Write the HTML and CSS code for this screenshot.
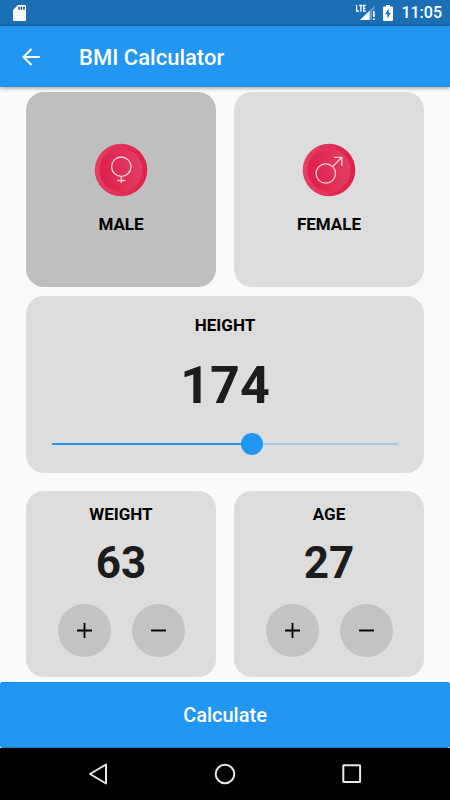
FILE: index.html
```html
<!DOCTYPE html>
<html lang="en">
<head>
<meta charset="utf-8">
<meta name="viewport" content="width=device-width, initial-scale=1">
<title>BMI Calculator</title>
<link rel="stylesheet" href="styles.css">
</head>
<body>
<div class="status">
  <svg class="sd" width="14" height="18" viewBox="0 0 14 18" aria-hidden="true"><path fill="#fff" d="M5 1h7Q13 1 13 2V16Q13 17 12 17H1Q0 17 0 16V6z"/><path stroke="#1b3f86" stroke-width="1.500" d="M6 2.800v3M8.500 2.800v3M11 2.800v3"/></svg>
  <svg class="signal" width="20" height="18" viewBox="0 0 20 18" aria-hidden="true"><path fill="#659fce" d="M19.500 1.500V6H17V16H5z"/><path fill="#fff" d="M14.500 7V16H5z"/><path fill="none" stroke="#fff" stroke-width="1.300" d="M1.600 .900V7.200H4M4.200 1.500H7.600M5.900 1.500V7.800M10.800 1.500H8.700V7.200H10.800M8.700 4.300H10.500"/><path fill="#fff" d="M18 7h1.700v6H18zM18 14.300h1.700V16H18z"/></svg>
  <svg width="10" height="18" viewBox="0 0 10 18" aria-hidden="true"><path fill="#fff" d="M3 1h4v1.500h2Q10 2.500 10 3.500V16Q10 17 9 17H1Q0 17 0 16V3.500Q0 2.500 1 2.500H3z"/><path fill="#1a6fb5" d="M5.700 4.500L2 10.200h2.400V14.500L8 8.700H5.700z"/></svg>
  <time class="clock">11:05</time>
</div>
<header class="appbar">
  <button class="back" type="button" aria-label="Back"><svg width="20" height="20" viewBox="0 0 20 20"><path fill="none" stroke="#fff" stroke-width="2" d="M18.800 9H2.500M10.500 1L2.500 9l8 8"/></svg></button>
  <h1 class="title">BMI Calculator</h1>
</header>
<main class="content">
  <div class="row genders">
    <button class="card gender selected" type="button" aria-pressed="true">
      <svg width="54" height="54" viewBox="0 0 54 54" aria-hidden="true"><defs><linearGradient id="rim" x1="0" x2="1" y1="0" y2="0"><stop offset="0" stop-color="#e63f63"/><stop offset="1" stop-color="#de1f4a"/></linearGradient><linearGradient id="face" x1="0" x2="1" y1="0.600" y2="0.400"><stop offset="0" stop-color="#de1f4a"/><stop offset="1" stop-color="#e23f62"/></linearGradient></defs><circle cx="27" cy="27" r="26.300" fill="url(#rim)"/><circle cx="27" cy="27" r="21.500" fill="url(#face)"/><g fill="none" stroke="#fbd3dc" stroke-width="1.300"><circle cx="27.300" cy="23.700" r="9.700"/><path d="M27.300 33.400V40M23.300 37.500h8"/></g></svg>
      <span class="label">MALE</span>
    </button>
    <button class="card gender" type="button" aria-pressed="false">
      <svg width="54" height="54" viewBox="0 0 54 54" aria-hidden="true"><circle cx="27" cy="27" r="26.300" fill="url(#rim)"/><circle cx="27" cy="27" r="21.500" fill="url(#face)"/><g fill="none" stroke="#fbd3dc" stroke-width="1.300"><circle cx="23.800" cy="30.500" r="9.700"/><path d="M30.700 23.600L39.500 14.500M32 14.300h7.800v8.500"/></g></svg>
      <span class="label">FEMALE</span>
    </button>
  </div>
  <section class="card height">
    <label class="label" for="height">HEIGHT</label>
    <output class="value large" for="height">174</output>
    <input class="slider" id="height" type="range" min="0" max="299" value="174">
  </section>
  <div class="row">
    <section class="card counter">
      <h2 class="label">WEIGHT</h2>
      <output class="value">63</output>
      <div class="steps">
        <button class="step" type="button" aria-label="Increase weight"><svg width="15" height="15" viewBox="0 0 16 16"><path stroke="#000" stroke-width="2" d="M0 8h16M8 0v16"/></svg></button>
        <button class="step" type="button" aria-label="Decrease weight"><svg width="15" height="15" viewBox="0 0 16 16"><path stroke="#000" stroke-width="2" d="M0 8h16"/></svg></button>
      </div>
    </section>
    <section class="card counter">
      <h2 class="label">AGE</h2>
      <output class="value">27</output>
      <div class="steps">
        <button class="step" type="button" aria-label="Increase age"><svg width="15" height="15" viewBox="0 0 16 16"><path stroke="#000" stroke-width="2" d="M0 8h16M8 0v16"/></svg></button>
        <button class="step" type="button" aria-label="Decrease age"><svg width="15" height="15" viewBox="0 0 16 16"><path stroke="#000" stroke-width="2" d="M0 8h16"/></svg></button>
      </div>
    </section>
  </div>
</main>
<button class="calculate" type="button">Calculate</button>
<nav class="sysnav" aria-label="System">
  <button type="button" aria-label="Back"><svg width="22" height="22" viewBox="0 0 22 22"><path fill="none" stroke="#e8e8e8" stroke-width="2" stroke-linejoin="round" d="M19 1.500v19L3 11z"/></svg></button>
  <button type="button" aria-label="Home"><svg width="22" height="22" viewBox="0 0 22 22"><circle cx="11" cy="11" r="9.300" fill="none" stroke="#e8e8e8" stroke-width="2"/></svg></button>
  <button type="button" aria-label="Recent apps"><svg width="22" height="22" viewBox="0 0 22 22"><rect x="2.300" y="2.300" width="16.800" height="16.800" rx=".5" fill="none" stroke="#e8e8e8" stroke-width="2"/></svg></button>
</nav>
</body>
</html>
```
FILE: styles.css
```css
* {
  box-sizing: border-box;
}

body {
  margin: 0;
  min-height: 100vh;
  display: flex;
  flex-direction: column;
  background: #fafafa;
  color: #000;
  font-family: Roboto, sans-serif;
}

button {
  margin: 0;
  padding: 0;
  border: 0;
  background: none;
  color: inherit;
  font: inherit;
}

svg {
  display: block;
}

.status {
  display: flex;
  align-items: center;
  height: 26px;
  padding: 0 8px 0 13px;
  background: #1a6fb5;
}

.signal {
  margin: 0 8px 0 auto;
}

.clock {
  margin-left: 8px;
  color: #fff;
  font-size: 16px;
  font-weight: 500;
  line-height: 28px;
}

.appbar {
  display: flex;
  align-items: center;
  gap: 38px;
  height: 61px;
  padding: 2px 21px 0;
  background: #2196f3;
  color: #fff;
  box-shadow: 0 1px 4px rgba(0, 0, 0, 0.4);
}

.title {
  margin: 0;
  font-size: 22px;
  font-weight: 500;
  line-height: 28px;
}

.content {
  flex: 1;
  padding: 5px 26px;
}

.row {
  display: grid;
  grid-template-columns: 1fr 1fr;
  gap: 18px;
}

.genders {
  margin-bottom: 9px;
}

.card {
  display: flex;
  flex-direction: column;
  align-items: center;
  border-radius: 18px;
  background: #ddd;
}

.gender {
  gap: 16px;
  padding: 51px 0 52px;
}

.selected {
  background: #bfbfbf;
}

.label {
  margin: 0;
  font-size: 17px;
  font-weight: 700;
  line-height: 22px;
}

.height {
  margin-bottom: 18px;
  padding: 18px 26px;
}

.value {
  color: #1c1c1c;
  font-size: 44px;
  font-weight: 700;
  line-height: 52px;
}

.large {
  margin: 20px 0 17px;
  font-size: 52px;
  line-height: 60px;
}

.slider {
  width: 100%;
  height: 22px;
  margin: 0;
  appearance: none;
  background: none;
}

.slider::-webkit-slider-runnable-track {
  height: 2px;
  background: linear-gradient(to right, #2196f3 58%, #a6c9e6 58%);
}

.slider::-webkit-slider-thumb {
  width: 22px;
  height: 22px;
  margin-top: -10px;
  appearance: none;
  border-radius: 50%;
  background: #2196f3;
}

.counter {
  padding: 12px 0 20px;
}

.counter .value {
  margin: 12px 0 15px;
}

.steps {
  display: flex;
  gap: 21px;
}

.step {
  display: grid;
  place-items: center;
  width: 53px;
  height: 53px;
  border-radius: 50%;
  background: #c3c3c3;
}

.calculate {
  height: 66px;
  border-top: 1px solid #0d8bee;
  border-bottom: 1px solid #1478c8;
  border-radius: 3px;
  background: #2196f3;
  color: #fff;
  font-size: 20px;
  font-weight: 500;
}

.sysnav {
  display: flex;
  justify-content: space-between;
  align-items: center;
  height: 52px;
  padding: 0 87px;
  background: #000;
}
```
